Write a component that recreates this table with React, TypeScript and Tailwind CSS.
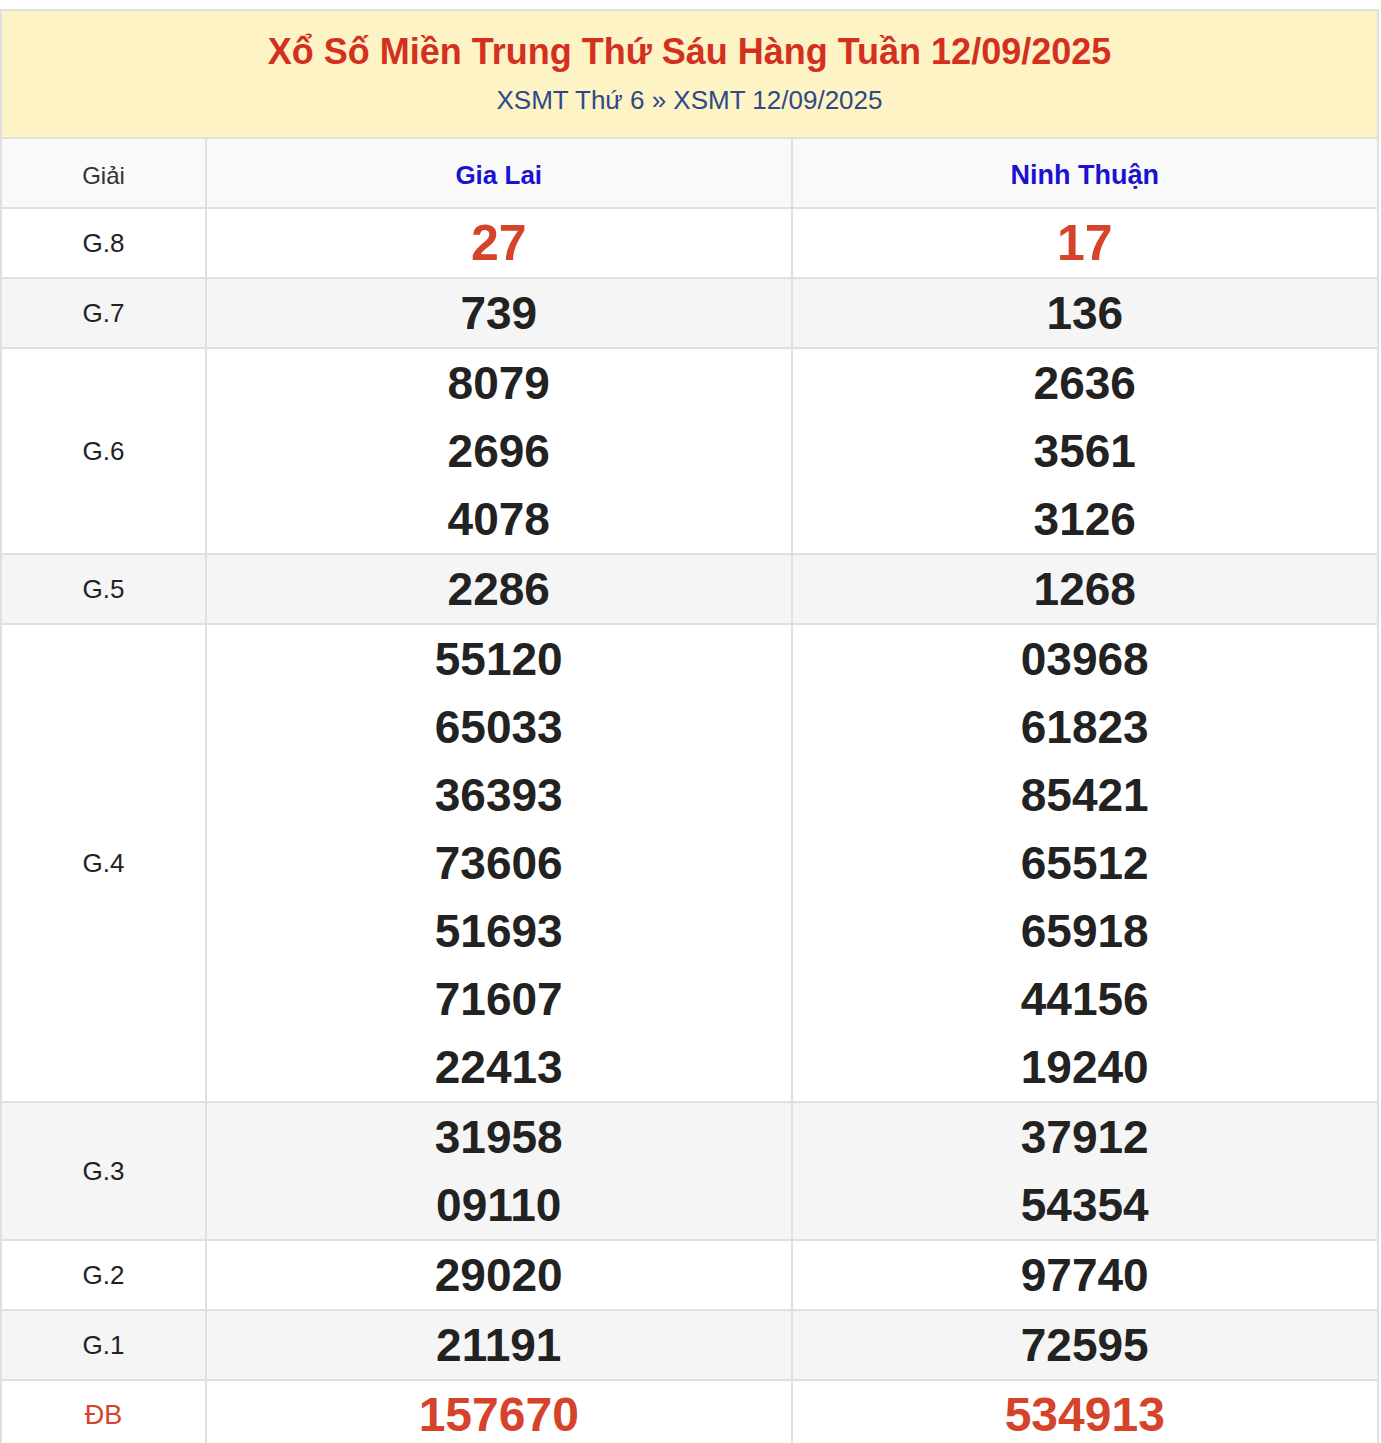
import React from 'react';

type Row = { label: string; a: string[]; b: string[]; special?: boolean; highlight?: boolean };

const rows: Row[] = [
  { label: 'G.8', a: ['27'], b: ['17'], highlight: true },
  { label: 'G.7', a: ['739'], b: ['136'] },
  { label: 'G.6', a: ['8079', '2696', '4078'], b: ['2636', '3561', '3126'] },
  { label: 'G.5', a: ['2286'], b: ['1268'] },
  {
    label: 'G.4',
    a: ['55120', '65033', '36393', '73606', '51693', '71607', '22413'],
    b: ['03968', '61823', '85421', '65512', '65918', '44156', '19240'],
  },
  { label: 'G.3', a: ['31958', '09110'], b: ['37912', '54354'] },
  { label: 'G.2', a: ['29020'], b: ['97740'] },
  { label: 'G.1', a: ['21191'], b: ['72595'] },
  { label: 'ĐB', a: ['157670'], b: ['534913'], special: true },
];

const Numbers = ({ items, row, last }: { items: string[]; row: Row; last?: boolean }) => (
  <td
    className={
      last
        ? 'border-2 border-r-0 border-[#e0e0e0] text-center align-middle p-0'
        : 'border-2 border-[#e0e0e0] text-center align-middle p-0'
    }
  >
    {items.map((n) => (
      <div
        key={n}
        className={
          row.special
            ? 'h-[68px] leading-[68px] text-[48px] font-bold text-[#d4432a]'
            : row.highlight
              ? 'h-[68px] leading-[68px] text-[50px] font-bold text-[#d4432a]'
              : 'h-[68px] leading-[68px] text-[46px] font-bold text-[#222222]'
        }
      >
        {n}
      </div>
    ))}
  </td>
);

export default function App() {
  return (
    <div className="bg-white min-h-screen pt-[9px] font-['Liberation_Sans',Arial,sans-serif]">
      <div className="w-[1379px] border-2 border-[#e0e0e0] border-b-0">
        {/* Title */}
        <div className="bg-[#fdf3c5] h-[126px] flex flex-col items-center pt-[18px]">
          <h1 className="text-[36px] font-bold text-[#d3301f] leading-[46px]">
            Xổ Số Miền Trung Thứ Sáu Hàng Tuần 12/09/2025
          </h1>
          <div className="text-[26px] text-[#2e4a86] leading-[32px] mt-[9px]">
            XSMT Thứ 6 » XSMT 12/09/2025
          </div>
        </div>

        <table className="w-full border-collapse table-fixed">
          <colgroup>
            <col className="w-[204px]" />
            <col />
            <col />
          </colgroup>
          <thead>
            <tr className="bg-[#f9f9f9] h-[70px]">
              <th className="border-2 border-[#e0e0e0] border-l-0 pt-[5px] font-normal text-[24px] text-[#333333]">Giải</th>
              <th className="border-2 border-[#e0e0e0] pt-[5px] font-bold text-[26px] text-[#1a12d0]">Gia Lai</th>
              <th className="border-2 border-[#e0e0e0] border-r-0 pt-[5px] font-bold text-[27px] text-[#1a12d0]">Ninh Thuận</th>
            </tr>
          </thead>
          <tbody>
            {rows.map((row, i) => (
              <tr key={row.label} className={i % 2 === 1 ? 'bg-[#f5f5f5]' : 'bg-white'}>
                <td
                  className={
                    row.special
                      ? 'border-2 border-[#e0e0e0] border-l-0 text-center text-[27px] text-[#d4432a]'
                      : 'border-2 border-[#e0e0e0] border-l-0 text-center text-[26px] text-[#222222]'
                  }
                >
                  {row.label}
                </td>
                <Numbers items={row.a} row={row} />
                <Numbers items={row.b} row={row} last />
              </tr>
            ))}
          </tbody>
        </table>
      </div>
    </div>
  );
}
